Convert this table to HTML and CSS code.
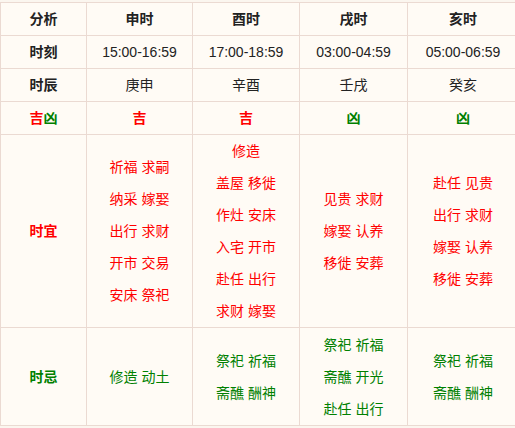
FILE: index.html
```html
<!DOCTYPE html>
<html lang="zh">
<head>
<meta charset="utf-8">
<link rel="stylesheet" href="styles.css">
</head>
<body>
<table class="sc-table">
  <colgroup>
    <col class="c0"><col class="c1"><col class="c2"><col class="c3"><col class="c4">
  </colgroup>
  <tr class="row">
    <th>分析</th><th>申时</th><th>酉时</th><th>戌时</th><th>亥时</th>
  </tr>
  <tr class="row">
    <th>时刻</th><td>15:00-16:59</td><td>17:00-18:59</td><td>03:00-04:59</td><td>05:00-06:59</td>
  </tr>
  <tr class="row">
    <th>时辰</th><td>庚申</td><td>辛酉</td><td>壬戌</td><td>癸亥</td>
  </tr>
  <tr class="row">
    <th><span class="red">吉</span><span class="green">凶</span></th>
    <td class="red bold">吉</td><td class="red bold">吉</td><td class="green bold">凶</td><td class="green bold">凶</td>
  </tr>
  <tr class="row-yi">
    <th class="red">时宜</th>
    <td class="red list"><div>祈福 求嗣</div><div>纳采 嫁娶</div><div>出行 求财</div><div>开市 交易</div><div>安床 祭祀</div></td>
    <td class="red list"><div>修造</div><div>盖屋 移徙</div><div>作灶 安床</div><div>入宅 开市</div><div>赴任 出行</div><div>求财 嫁娶</div></td>
    <td class="red list"><div>见贵 求财</div><div>嫁娶 认养</div><div>移徙 安葬</div></td>
    <td class="red list"><div>赴任 见贵</div><div>出行 求财</div><div>嫁娶 认养</div><div>移徙 安葬</div></td>
  </tr>
  <tr class="row-ji">
    <th class="green">时忌</th>
    <td class="green list"><div>修造 动土</div></td>
    <td class="green list"><div>祭祀 祈福</div><div>斋醮 酬神</div></td>
    <td class="green list"><div>祭祀 祈福</div><div>斋醮 开光</div><div>赴任 出行</div></td>
    <td class="green list"><div>祭祀 祈福</div><div>斋醮 酬神</div></td>
  </tr>
</table>
</body>
</html>
```

FILE: styles.css
```css
html, body {
  margin: 0;
  padding: 0;
  background: #fbf6ef;
  overflow: hidden;
}
body {
  padding-top: 2px;
  font-family: "Liberation Sans", "Noto Sans CJK SC", sans-serif;
  font-size: 14px;
  color: #222;
}
.sc-table {
  border-collapse: collapse;
  table-layout: fixed;
  width: 518px;
  background: #fffbf5;
}
.c0 { width: 86px; }
.c1 { width: 106px; }
.c2 { width: 107px; }
.c3 { width: 108px; }
.c4 { width: 111px; }
.sc-table th,
.sc-table td {
  border: 1px solid #ebdad2;
  padding: 0;
  text-align: center;
  vertical-align: middle;
  line-height: 32px;
  font-weight: normal;
}
.sc-table th {
  font-weight: bold;
}
.row { height: 33px; }
.row-yi { height: 193px; }
.row-ji { height: 98px; }
.red { color: #f00; }
.green { color: #008000; }
.sc-table .bold { font-weight: bold; }
.list div { line-height: 32px; }
```
